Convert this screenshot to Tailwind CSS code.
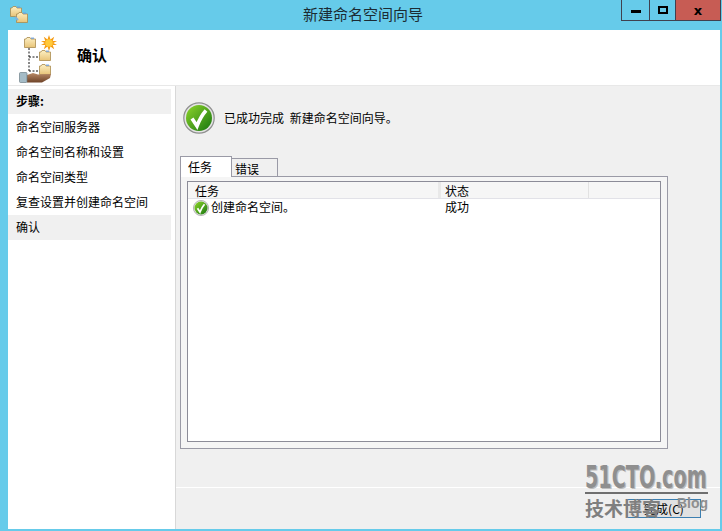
<!DOCTYPE html>
<html lang="zh">
<head>
<meta charset="UTF-8">
<title>新建命名空间向导</title>
<script src="https://cdn.jsdelivr.net/npm/@tailwindcss/browser@4"></script>
</head>
<body class="m-0 overflow-hidden">
<svg width="0" height="0" class="absolute">
  <defs>
    <linearGradient id="g" x1="0" y1="0" x2="1" y2="1"><stop offset="0" stop-color="#8fd62a"/><stop offset="1" stop-color="#167510"/></linearGradient>
    <linearGradient id="f" x1="0" y1="0" x2="0" y2="1"><stop offset="0" stop-color="#fdf0c4"/><stop offset="1" stop-color="#e8c478"/></linearGradient>
    <linearGradient id="h" x1="0" y1="0" x2="0" y2="1"><stop offset="0" stop-color="#b98a66"/><stop offset="1" stop-color="#6e4328"/></linearGradient>
    <symbol id="ok" viewBox="0 0 32 32">
      <circle cx="16" cy="16" r="15.2" fill="#e4e4e4" stroke="#8f8f8f" stroke-width="1.2"/>
      <circle cx="16" cy="16" r="13" fill="url(#g)"/>
      <path d="M9 16.500l5 7.500c2.500-6.500 5-11 9-15.500" fill="none" stroke="#fff" stroke-width="3.600"/>
    </symbol>
    <symbol id="folder" viewBox="0 0 12 11">
      <path d="M.5 10.500v-8.500h1.500l1-1.500h3l1 1.500h4.500v8.500z" fill="url(#f)" stroke="#a98c4f" stroke-width=".8"/>
      <rect x="7" y=".6" width="3" height="1.200" fill="#6f9fd8"/>
    </symbol>
  </defs>
</svg>

<div class="relative w-[722px] h-[531px] bg-[#66cbea] flex flex-col pl-2 pr-0.5 pb-0.5 font-['Noto_Sans_CJK_SC',sans-serif] text-xs text-black">
  <!-- title bar -->
  <div class="h-[30px] shrink-0 relative flex items-start">
    <svg width="18" height="18" viewBox="0 0 18 18" class="mt-1.5 ml-[2px]">
      <use href="#folder" x="0" y="0" width="12" height="11"/>
      <use href="#folder" x="6" y="6" width="12" height="11"/>
      <path d="M5 11l3 3" stroke="#7fb4dc" stroke-width="2"/>
    </svg>
    <div class="absolute left-0 right-0 top-[3px] text-center text-[15px] leading-[22px] text-[#1c2b33] pr-[2px]">新建命名空间向导</div>
    <div class="absolute top-0 right-[-1px] h-[21px] flex border border-t-0 border-[#40404f]">
      <div class="w-[28px] flex items-center justify-center border-r border-[#40404f]"><div class="w-[10px] h-[3px] mt-[3px] bg-black"></div></div>
      <div class="w-[25px] flex items-center justify-center"><div class="w-[10px] h-[8px] border-2 border-black"></div></div>
      <div class="w-[45px] bg-[#c75c54] flex items-center justify-center border-l border-[#40404f] font-['DejaVu_Sans'] font-bold text-[13px] leading-none">x</div>
    </div>
  </div>

  <!-- header -->
  <div class="h-[56px] shrink-0 bg-white border-b border-[#e8e8e8] flex items-start">
    <svg width="42" height="52" viewBox="18 33 42 52" class="ml-[10px] mt-[3px]">
      <path d="M29 48v24M29 57h10M29 71h10" stroke="#111" stroke-width="1" stroke-dasharray="2 1.500" fill="none"/>
      <use href="#folder" x="24" y="37" width="12" height="11"/>
      <use href="#folder" x="39" y="50" width="12" height="11"/>
      <use href="#folder" x="39" y="64" width="12" height="11"/>
      <path d="M49 35l1.500 4.500 3.700-2.700-1.500 4.200 4.300.0-3.700 2 3.700 2-4.300.0 1.500 4.200-3.700-2.700-1.500 4.500-1.500-4.500-3.700 2.700 1.500-4.200-4.300.0 3.700-2-3.700-2 4.300.0-1.500-4.200 3.700 2.700z" fill="#f59a12"/>
      <circle cx="49" cy="43" r="3.800" fill="#ffc93a"/>
      <path d="M27 75l6-2 5 1.500 13-.5-1 4-8 4.500h-15z" fill="url(#h)"/>
      <rect x="19.500" y="72.500" width="7.500" height="10" rx="1" fill="#a5bcc7" stroke="#6e7f88" stroke-width=".7"/>
    </svg>
    <div class="ml-[17px] mt-[17px] text-[15px] font-bold leading-[16px]">确认</div>
  </div>

  <!-- body -->
  <div class="flex-1 flex min-h-0 relative">
    <div class="w-[163px] shrink-0 bg-white pt-[3px]">
      <div class="h-[25px] bg-[#f0f0f0] pl-2 font-bold leading-[23px]">步骤:</div>
      <div class="mt-px">
        <div class="h-[25px] pl-2 leading-[23px]">命名空间服务器</div>
        <div class="h-[25px] pl-2 leading-[23px]">命名空间名称和设置</div>
        <div class="h-[25px] pl-2 leading-[23px]">命名空间类型</div>
        <div class="h-[25px] pl-2 leading-[23px]">复查设置并创建命名空间</div>
        <div class="h-[25px] pl-2 leading-[23px] bg-[#f0f0f0]">确认</div>
      </div>
    </div>
    <div class="w-[4px] shrink-0 bg-white"></div>
    <div class="w-px shrink-0 bg-[#d8d8d8]"></div>

    <div class="flex-1 bg-[#f0f0f0] flex flex-col min-w-0">
      <div class="flex-1 pl-[4px]">
        <div class="h-[70px] pt-4 pl-[3px]">
          <div class="h-[32px] flex items-center">
            <svg width="32" height="32" class="shrink-0"><use href="#ok"/></svg>
            <div class="ml-[9px] leading-none [word-spacing:3px]">已成功完成 新建命名空间向导。</div>
          </div>
        </div>
        <div class="flex items-end h-[20px]">
          <div class="w-[52px] h-[21px] bg-white border border-b-0 border-[#9a9aa6] pl-[7px] leading-[20px] relative z-10 -mb-px">任务</div>
          <div class="w-[46px] h-[18px] bg-[#f0f0f0] border border-l-0 border-b-0 border-[#9a9aa6] pl-[3px] leading-[19px]">错误</div>
        </div>
        <div class="h-[273px] w-[488px] border border-[#9a9aa6] bg-[#f5f5f5] pl-[6px] pr-[6px] pt-[4px] pb-[6px]">
          <div class="h-full border border-[#8c8c98] bg-white">
            <div class="h-[17px] flex bg-[#f6f6f6] border-b border-[#e2e2e8] leading-[18px]">
              <div class="w-[253px] pl-[7px] border-r-[3px] border-[#e9e9e9]">任务</div>
              <div class="w-[148px] pl-[4px] border-r border-[#e2e2e2]">状态</div>
            </div>
            <div class="h-[17px] flex leading-[15px]">
              <div class="w-[253px] pl-[5px] flex items-center">
                <svg width="16" height="16" class="shrink-0"><use href="#ok"/></svg>
                <span class="ml-[2px] -mt-[2px]">创建命名空间。</span>
              </div>
              <div class="pl-[4px]">成功</div>
            </div>
          </div>
        </div>
      </div>
      <div class="h-[42px] shrink-0 border-t border-white flex justify-end items-start pt-[11px] pr-[19px]">
        <button class="w-[74px] h-[19px] bg-[#e1e1e1] border border-[#3c7fb1] text-center leading-[17px]">完成(C)</button>
      </div>
    </div>
  </div>

  <!-- watermark -->
  <div class="absolute left-[585px] top-[464px] w-[124px] text-[#8f8f8f] pointer-events-none">
    <div class="h-[27px] font-['DejaVu_Sans',sans-serif] font-bold text-[32px] leading-[27px] whitespace-nowrap origin-left scale-x-[0.6] [text-shadow:2px_1px_0_#bdbdbd]">51CTO.com</div>
    <div class="h-[2px] mt-[1px] w-[123px] bg-[#6f6f6f]"></div>
    <div class="relative h-[22px] mt-[3px] w-[123px]">
      <span class="absolute left-0 top-0 font-bold text-[19px] leading-[22px] text-[#7f7f7f]">技术博客</span>
      <span class="absolute right-0 top-0 font-['Liberation_Sans'] font-bold text-[14px] leading-[13px] text-[#8f8f8f]">Blog</span>
    </div>
  </div>
</div>
</body>
</html>
